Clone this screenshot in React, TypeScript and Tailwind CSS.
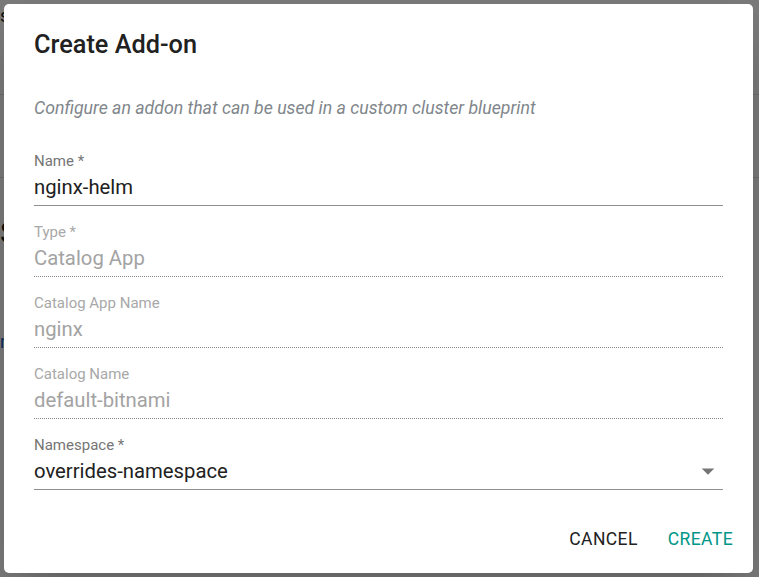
import { ReactNode } from "react"

const font = { fontFamily: "Roboto, 'Liberation Sans', sans-serif" }

const Field = ({
  label,
  children,
  disabled = false,
  select = false,
}: {
  label: string
  children: ReactNode
  disabled?: boolean
  select?: boolean
}) => (
  <div className="mt-[17px] first:mt-0">
    <div className={`text-[15px] leading-[18px] ${disabled ? "text-[#a8a8a8]" : "text-[#757575]"}`}>{label}</div>
    <div
      className={`flex items-center justify-between pt-[5px] pb-[6px] border-b ${
        disabled ? "border-dotted border-[#8a8a8a]" : "border-solid border-[#8f8f8f]"
      }`}
    >
      <span className={`text-[20.3px] leading-[24px] ${disabled ? "text-[#a3a3a3]" : "text-[#212121]"}`}>{children}</span>
      {select && (
        <svg className="w-[30px] h-[30px] -my-[3px] text-[#757575]" viewBox="0 0 24 24" fill="currentColor">
          <path d="M7 10l5 5 5-5z" />
        </svg>
      )}
    </div>
  </div>
)

export default function App() {
  return (
    <div className="relative w-[759px] h-[577px] overflow-hidden bg-white" style={font}>
      {/* page behind the dialog */}
      <div className="flex flex-col text-[#212121]">
        <div className="h-[95px] border-b border-[#e0e0e0] pt-[2px] text-[18px]">s</div>
        <div className="h-[83px] border-b border-[#e0e0e0]" />
        <div className="pt-[40px] text-[30px] leading-[30px]">S</div>
        <div className="pt-[80px] text-[18px] text-[#1565c0]">rea</div>
      </div>

      {/* backdrop */}
      <div className="absolute inset-0 bg-black/[0.52]" />

      {/* dialog */}
      <div className="absolute left-[4px] top-[4px] w-[749px] h-[569px] bg-white rounded-[5px] shadow-2xl flex flex-col">
        <div className="px-[30px] pt-[21px]">
          <h2 className="text-[25.3px] leading-[40px] font-medium text-[#212121]">Create Add-on</h2>
        </div>

        <div className="px-[30px]">
          <p className="mt-[31px] text-[17.7px] leading-[24px] italic text-[#80868b]">
            Configure an addon that can be used in a custom cluster blueprint
          </p>

          <div className="mt-[32px] flex flex-col">
            <Field label="Name *">nginx-helm</Field>
            <Field label="Type *" disabled>
              Catalog App
            </Field>
            <Field label="Catalog App Name" disabled>
              nginx
            </Field>
            <Field label="Catalog Name" disabled>
              default-bitnami
            </Field>
            <Field label="Namespace *" select>
              overrides-namespace
            </Field>
          </div>
        </div>

        <div className="mt-auto flex justify-end items-center gap-[10px] pt-[10px] pb-[11px] pl-[10px] pr-[10px]">
          <button className="h-[45px] px-[10px] text-[17.5px] tracking-[0.4px] text-[#212121] rounded">CANCEL</button>
          <button className="h-[45px] px-[10px] text-[17.5px] tracking-[0.4px] text-[#009688] rounded">CREATE</button>
        </div>
      </div>
    </div>
  )
}
